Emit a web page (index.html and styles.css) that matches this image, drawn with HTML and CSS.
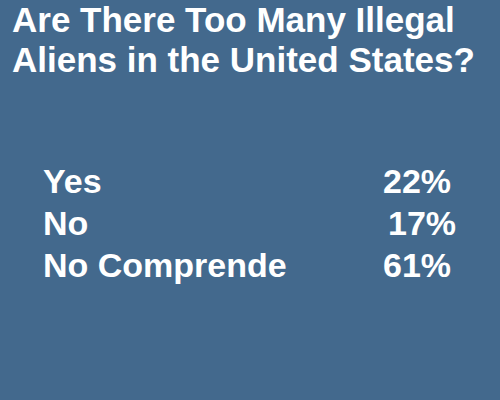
FILE: index.html
```html
<!DOCTYPE html>
<html lang="en">
  <head>
    <meta charset="UTF-8" />
    <meta name="viewport" content="width=device-width, initial-scale=1.0" />
    <title>Poll</title>
    <link rel="stylesheet" href="styles.css">
  </head>
  <body>
    <div class="slide">
      <h1 class="title">Are There Too Many Illegal Aliens in the United States?</h1>
      <div class="results">
        <div class="row">
          <span class="answer">Yes</span>
          <span class="pct">22%</span>
        </div>
        <div class="row">
          <span class="answer">No</span>
          <span class="pct shift">17%</span>
        </div>
        <div class="row">
          <span class="answer">No Comprende</span>
          <span class="pct">61%</span>
        </div>
      </div>
    </div>
  </body>
</html>
```

FILE: styles.css
```css
body {
  margin: 0;
  padding: 0;
  background-color: #43698d;
  color: #fff;
  font-family: "Liberation Sans", Arial, sans-serif;
  font-weight: bold;
}
.slide {
  width: 500px;
  height: 400px;
  overflow: hidden;
}
.title {
  margin: 0;
  padding: 0 10px 0 12px;
  font-size: 35px;
  line-height: 40px;
  font-weight: bold;
}
.results {
  margin-top: 80px;
  padding-left: 43px;
}
.row {
  display: flex;
  font-size: 34px;
  line-height: 42px;
}
.answer {
  width: 340px;
}
.pct.shift {
  padding-left: 5px;
}
```
